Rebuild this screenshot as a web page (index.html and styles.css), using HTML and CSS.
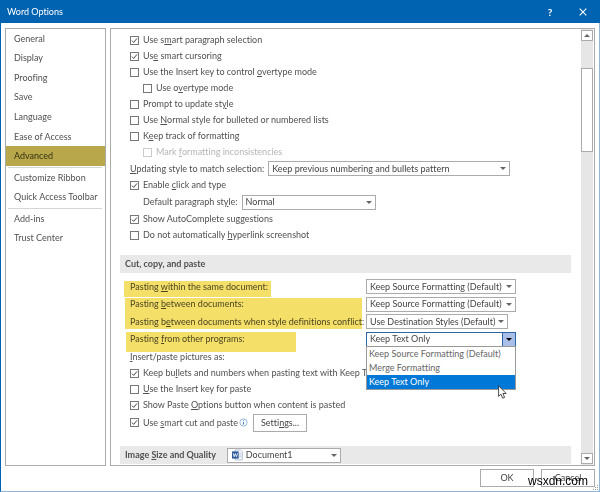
FILE: index.html
```
<!DOCTYPE html>
<html lang="en">
<head>
    <meta charset="UTF-8">
    <meta name="viewport" content="width=device-width, initial-scale=1.0">
    <title>Word Options</title>
    <link rel="stylesheet" href="styles.css">
</head>
<body>
    <div class="dialog">
        <header class="titlebar">
            <h1>Word Options</h1>
            <button class="title-btn" type="button" aria-label="Help">?</button>
            <button class="title-btn" type="button" aria-label="Close">
                <svg width="8" height="8" viewBox="0 0 8 8"><path d="M.7.7l6.6 6.6M7.3.7L.7 7.3" stroke="#fff" stroke-width="1.1"/></svg>
            </button>
        </header>

        <div class="panels">
            <nav class="sidebar">
                <div class="nav-group nav-main">
                    <a href="#">General</a>
                    <a href="#">Display</a>
                    <a href="#">Proofing</a>
                    <a href="#">Save</a>
                    <a href="#">Language</a>
                    <a href="#">Ease of Access</a>
                    <a href="#" class="active">Advanced</a>
                </div>
                <div class="nav-group">
                    <a href="#">Customize Ribbon</a>
                    <a href="#">Quick Access Toolbar</a>
                </div>
                <div class="nav-group">
                    <a href="#">Add-ins</a>
                    <a href="#">Trust Center</a>
                </div>
            </nav>

            <main class="content">
                <div class="options">
                    <section class="editing">
                        <label class="check"><input type="checkbox" checked><span>Use s<u>m</u>art paragraph selection</span></label>
                        <label class="check"><input type="checkbox" checked><span>Us<u>e</u> smart cursoring</span></label>
                        <label class="check"><input type="checkbox"><span>Use the Insert key to control <u>o</u>vertype mode</span></label>
                        <label class="check indent"><input type="checkbox"><span>Use o<u>v</u>ertype mode</span></label>
                        <label class="check"><input type="checkbox"><span>Prompt to update st<u>y</u>le</span></label>
                        <label class="check"><input type="checkbox"><span>Use <u>N</u>ormal style for bulleted or numbered lists</span></label>
                        <label class="check"><input type="checkbox"><span>K<u>e</u>ep track of formatting</span></label>
                        <label class="check indent disabled"><input type="checkbox" disabled><span>Mark <u>f</u>ormatting inconsistencies</span></label>
                        <div class="field">
                            <label for="updating"><u>U</u>pdating style to match selection:</label>
                            <span class="select wide"><select id="updating"><option>Keep previous numbering and bullets pattern</option></select></span>
                        </div>
                        <label class="check"><input type="checkbox" checked><span>Enable <u>c</u>lick and type</span></label>
                        <div class="field indent-field">
                            <label for="paragraph">Default paragraph st<u>y</u>le:</label>
                            <span class="select medium"><select id="paragraph"><option>Normal</option></select></span>
                        </div>
                        <label class="check"><input type="checkbox" checked><span>Show AutoComplete suggestions</span></label>
                        <label class="check"><input type="checkbox"><span>Do not automatically <u>h</u>yperlink screenshot</span></label>
                    </section>

                    <h2>Cut, copy, and paste</h2>
                    <section class="paste">
                        <div class="paste-grid">
                            <span class="mark mark-within"></span>
                            <span class="mark mark-between"></span>
                            <span class="mark mark-programs"></span>
                            <label for="within">Pasting <u>w</u>ithin the same document:</label>
                            <span class="select"><select id="within"><option>Keep Source Formatting (Default)</option></select></span>
                            <label for="between">Pasting <u>b</u>etween documents:</label>
                            <span class="select"><select id="between"><option>Keep Source Formatting (Default)</option></select></span>
                            <label for="conflict">Pasting b<u>e</u>tween documents when style definitions conflict:</label>
                            <span class="select narrow"><select id="conflict"><option>Use Destination Styles (Default)</option></select></span>
                            <label for="programs">Pasting <u>f</u>rom other programs:</label>
                            <div class="select open">
                                <select id="programs"><option>Keep Text Only</option></select>
                                <ul class="menu">
                                    <li>Keep Source Formatting (Default)</li>
                                    <li>Merge Formatting</li>
                                    <li class="selected">Keep Text Only</li>
                                </ul>
                                <svg class="cursor" width="9" height="14" viewBox="0 0 9 14"><path d="M.6.8v10.6l2.4-2.2 1.7 4 1.9-.8-1.7-3.9h3.3z" fill="#fff" stroke="#222" stroke-width=".8"/></svg>
                            </div>
                        </div>
                        <p class="plain"><u>I</u>nsert/paste pictures as:</p>
                        <label class="check"><input type="checkbox" checked><span>Keep bu<u>l</u>lets and numbers when pasting text with Keep Text</span></label>
                        <label class="check"><input type="checkbox"><span><u>U</u>se the Insert key for paste</span></label>
                        <label class="check"><input type="checkbox" checked><span>Show Paste <u>O</u>ptions button when content is pasted</span></label>
                        <div class="smart">
                            <label class="check"><input type="checkbox" checked><span>Use <u>s</u>mart cut and paste</span></label>
                            <svg width="9" height="9" viewBox="0 0 9 9"><circle cx="4.5" cy="4.5" r="3.6" fill="none" stroke="#79a6d2" stroke-width=".8"/><path d="M4.5 4v2.6M4.5 2.2v1" stroke="#4a86c5"/></svg>
                            <button class="btn" type="button">Setti<u>n</u>gs...</button>
                        </div>
                    </section>

                    <div class="heading">
                        <label for="document">Image <u>S</u>ize and Quality</label>
                        <span class="select doc">
                            <svg width="12" height="12" viewBox="0 0 12 12"><path d="M3.5.5h6l2 2v9h-8z" fill="#fff" stroke="#8fa6c6" stroke-width=".8"/><path d="M8 4h2.5M8 6h2.5M8 8h2.5" stroke="#8fa6c6" stroke-width=".7"/><path d="M0 2h7.5v8H0z" fill="#2b579a"/><path d="M1.3 4l1.1 4 1.3-3.6L5 8l1.2-4" fill="none" stroke="#fff" stroke-width=".9"/></svg>
                            <select id="document"><option>Document1</option></select>
                        </span>
                    </div>
                </div>

                <div class="scrollbar">
                    <button class="arrow up" type="button" aria-label="Scroll up"></button>
                    <div class="track"><div class="thumb"></div></div>
                    <button class="arrow down" type="button" aria-label="Scroll down"></button>
                </div>
            </main>
        </div>

        <footer class="actions">
            <button class="btn" type="button">OK</button>
            <button class="btn" type="button">Cancel</button>
        </footer>
        <span class="watermark">wsxdn.com</span>
        <svg class="grip" width="6" height="6" viewBox="0 0 6 6"><path d="M4 0h1v1H4zM2 2h1v1H2zM4 2h1v1H4zM0 4h1v1H0zM2 4h1v1H2zM4 4h1v1H4z" fill="#a0a0a0"/></svg>
    </div>
</body>
</html>
```
FILE: styles.css
```
* {
    box-sizing: border-box;
}
body {
    margin: 0;
    font-family: Lato, "Open Sans", sans-serif;
    font-size: 9px;
    font-variant-ligatures: none;
    line-height: 12px;
    color: #505050;
    background: #fff;
}
button, select, input {
    margin: 0;
    font: inherit;
    font-variant-ligatures: none;
    color: inherit;
}
u {
    text-underline-offset: 1px;
    text-decoration-thickness: 1px;
}
.dialog {
    position: relative;
    display: flex;
    flex-direction: column;
    min-height: 100vh;
    border: 1px solid #8fb4d6;
    border-left-color: #0063b1;
}

/* title bar */
.titlebar {
    display: flex;
    align-items: center;
    height: 23px;
    margin: -1px -1px 0;
    padding: 0 13px 0 7px;
    background: #0063b1;
    color: #fff;
}
.titlebar h1 {
    flex: 1;
    margin: 0;
    font-size: 9px;
    font-weight: 400;
}
.title-btn {
    display: flex;
    align-items: center;
    justify-content: center;
    width: 8px;
    margin-left: 25px;
    padding: 0;
    border: 0;
    background: none;
    font-size: 10px;
    font-weight: 700;
}

/* panels */
.panels {
    flex: 1;
    display: flex;
    gap: 4px;
    padding: 5px 4px 0;
}
.sidebar {
    width: 101px;
    border: 1px solid #ababab;
}
.nav-group {
    display: grid;
    grid-auto-rows: 1fr;
    height: 40px;
    margin: 0 3px 0 2px;
    border-top: 1px solid #d5d5d5;
}
.nav-group + .nav-group {
    margin-top: 1px;
}
.nav-group a {
    display: flex;
    align-items: center;
    padding-left: 6px;
    color: inherit;
    text-decoration: none;
}
.nav-main {
    height: 137px;
    margin: 0;
    border: 0;
}
.nav-main a {
    padding-left: 8px;
}
.nav-group .active {
    background: #b9a84b;
    color: #33300f;
}
.content {
    flex: 1;
    display: flex;
    border: 1px solid #ababab;
}
.options {
    flex: 1;
    padding: 3px 10px 1px 9px;
}

/* options */
.editing {
    padding-left: 10px;
}
.check {
    display: flex;
    align-items: center;
    gap: 4px;
    height: 16px;
    white-space: nowrap;
}
.check input {
    appearance: none;
    width: 9px;
    height: 9px;
    border: 1px solid #777;
    background: #fff;
}
.check input:checked {
    background: url("data:image/svg+xml,%3Csvg xmlns='http://www.w3.org/2000/svg' viewBox='0 0 7 7'%3E%3Cpath d='M1 3.6l1.7 1.8L6 1.4' fill='none' stroke='%23444'/%3E%3C/svg%3E") center / 7px 7px no-repeat;
}
.indent {
    margin-left: 13px;
}
.check.disabled {
    color: #b5b5b5;
}
.disabled input {
    border-color: #ccc;
}
.field {
    display: flex;
    align-items: center;
    gap: 4px;
    height: 17px;
}
.indent-field {
    margin-left: 13px;
    height: 18px;
}
.select {
    position: relative;
    display: flex;
    align-items: center;
    width: 150px;
    height: 15px;
    border: 1px solid #ababab;
    background: #fff;
    color: #444;
}
.select::after {
    content: "";
    position: absolute;
    right: 3px;
    top: 5px;
    border: 3px solid transparent;
    border-top-color: #666;
    border-bottom: 0;
    pointer-events: none;
}
.select select {
    appearance: none;
    width: 100%;
    height: 13px;
    padding: 0 3px;
    border: 0;
    background: none;
    outline: 0;
}
.select.wide {
    width: 242px;
}
.select.medium {
    width: 134px;
}
.select.narrow {
    width: 142px;
}

/* section headings */
h2, .heading {
    display: flex;
    align-items: center;
    height: 18px;
    margin: 12px 0 0;
    padding-left: 5px;
    background: #e9e9e9;
    font-size: 9px;
    font-weight: 700;
}
.heading {
    gap: 11px;
    margin-top: 14px;
    font-weight: 400;
}
.heading label {
    font-weight: 700;
}
.select.doc {
    width: 114px;
    padding-left: 4px;
}

/* cut, copy, and paste */
.paste {
    padding: 5px 0 0 10px;
}
.paste-grid {
    position: relative;
    display: grid;
    grid-template-columns: 236px 1fr;
    grid-template-rows: repeat(4, 1fr);
    align-items: center;
    height: 70px;
    white-space: nowrap;
}
.mark {
    position: absolute;
    background: #f4df69;
    mix-blend-mode: multiply;
}
.mark-within {
    left: -6px;
    top: 3px;
    width: 147px;
    height: 16px;
}
.mark-between {
    left: -5px;
    top: 20px;
    width: 237px;
    height: 31px;
}
.mark-programs {
    left: -4px;
    top: 54px;
    width: 170px;
    height: 20px;
}
.open {
    border-color: #2a66a8;
}
.open::after {
    right: 0;
    top: 0;
    width: 12px;
    height: 13px;
    border: 0;
    border-left: 1px solid #2a66a8;
    background: #a9bfe8 url("data:image/svg+xml,%3Csvg xmlns='http://www.w3.org/2000/svg' viewBox='0 0 6 3'%3E%3Cpath d='M0 0h6L3 3z'/%3E%3C/svg%3E") center / 6px 3px no-repeat;
}
.menu {
    position: absolute;
    left: -1px;
    right: -1px;
    top: 13px;
    z-index: 1;
    margin: 0;
    padding: 0;
    border: 1px solid #999;
    background: #fff;
    list-style: none;
}
.menu li {
    height: 14px;
    padding-left: 2px;
    line-height: 14px;
    color: #666;
}
.menu .selected {
    background: #0078d7;
    color: #fff;
}
.cursor {
    position: absolute;
    left: 131px;
    top: 52px;
    z-index: 2;
}
.plain {
    margin: 0;
    height: 17px;
    line-height: 18px;
}
.smart {
    display: flex;
    align-items: center;
    gap: 1px;
    height: 19px;
}
.btn {
    height: 18px;
    width: 54px;
    padding: 0;
    border: 1px solid #ababab;
    background: #fff;
    color: #444;
}
.smart .btn {
    margin-left: 4px;
}

/* scrollbar */
.scrollbar {
    display: flex;
    flex-direction: column;
    width: 12px;
    margin-right: 1px;
    padding: 1px 0;
    background: #e6e6e6;
}
.arrow {
    display: flex;
    align-items: center;
    justify-content: center;
    height: 11px;
    padding: 0;
    border: 1px solid #ababab;
    background: #fff;
}
.arrow::before {
    content: "";
    border: 3px solid transparent;
}
.up::before {
    border-bottom-color: #666;
    border-top: 0;
}
.down::before {
    border-top-color: #666;
    border-bottom: 0;
}
.track {
    flex: 1;
    padding-top: 27px;
}
.thumb {
    height: 84px;
    border: 1px solid #ababab;
    background: #fff;
}

/* footer */
.actions {
    display: flex;
    justify-content: flex-end;
    gap: 7px;
    padding: 3px 4px 4px;
}
.watermark {
    position: absolute;
    right: 11px;
    bottom: 2px;
    font: 12px/16px "Liberation Sans", sans-serif;
    color: #000;
}
.grip {
    position: absolute;
    right: 0;
    bottom: 0;
}
```
